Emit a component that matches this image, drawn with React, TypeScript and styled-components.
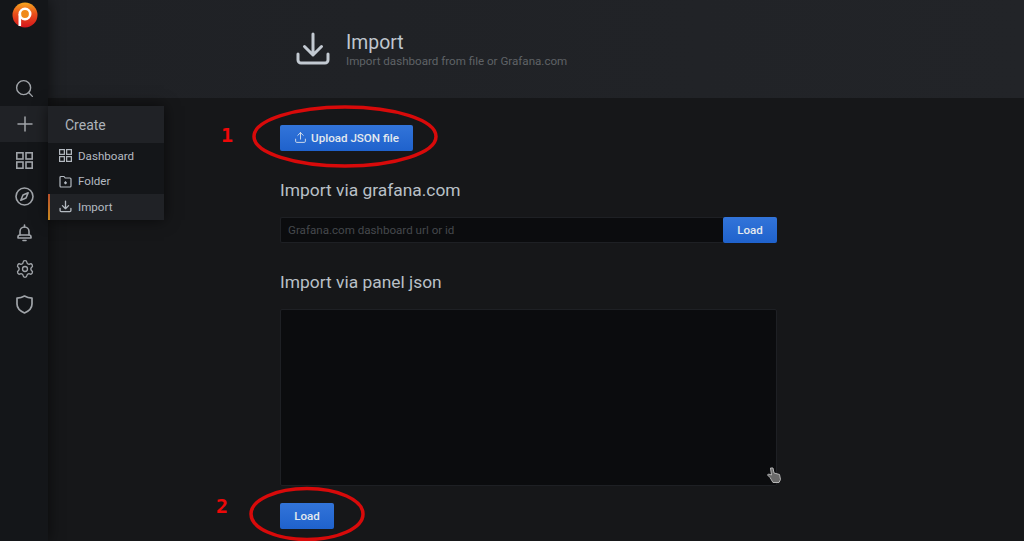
import styled, { createGlobalStyle } from 'styled-components';
import { Search, Plus, Settings, Upload } from 'lucide-react';

const GlobalStyle = createGlobalStyle`
    html, body {
        margin: 0;
        padding: 0;
        background: #161719;
        font-family: Roboto, "Liberation Sans", sans-serif;
    }
    * {
        box-sizing: border-box;
    }
`

const Page = styled.div`
    position: relative;
    display: flex;
    width: 1024px;
    height: 541px;
    overflow: hidden;
    background: #161719;
`

const SideMenu = styled.nav`
    display: flex;
    flex-direction: column;
    flex: 0 0 48px;
    width: 48px;
    padding-top: 2px;
    background: #141619;
    box-shadow: 0 0 16px rgba(0,0,0,0.6);
    z-index: 1;
`

const LogoBox = styled.div`
    display: flex;
    justify-content: center;
    height: 68px;
    margin-left: 1px;
`

const NavItem = styled.div<{ $active?: boolean }>`
    display: flex;
    align-items: center;
    justify-content: center;
    height: 36.15px;
    padding-left: 1px;
    color: #a0a4a9;
    background: ${(p) => (p.$active ? '#202226' : 'transparent')};
`

const Main = styled.main`
    flex: 1;
    display: flex;
    flex-direction: column;
`

const PageHeader = styled.header`
    display: flex;
    align-items: center;
    gap: 15px;
    height: 98px;
    padding: 0 0 0 247px;
    background: linear-gradient(90deg, #1f2125, #222428);
    color: #c3cad2;
`

const HeaderText = styled.div`
    display: flex;
    flex-direction: column;
`

const Title = styled.h1`
    margin: 1px 0 0;
    font-size: 19.4px;
    line-height: 23px;
    font-weight: 400;
    color: #bfc6ce;
`

const SubTitle = styled.div`
    font-size: 11.6px;
    line-height: 14px;
    color: #5f6266;
`

const Content = styled.section`
    display: flex;
    flex-direction: column;
    align-items: flex-start;
    width: 497px;
    margin-left: 232px;
    padding-top: 27px;
`

const BlueButton = styled.button<{ $width: number }>`
    display: flex;
    align-items: center;
    justify-content: center;
    gap: 4px;
    width: ${(p) => p.$width}px;
    height: 26px;
    padding: 0 0 1px;
    border: 0;
    border-radius: 2px;
    background: linear-gradient(180deg, #3274d9, #1f62cc);
    color: #e4e9ee;
    font-family: inherit;
    font-size: 11.6px;
    font-weight: 500;
`

const SectionTitle = styled.h2`
    margin: 0;
    font-size: 17.4px;
    line-height: 20px;
    font-weight: 400;
    color: #b9c0c7;
`

const ViaTitle = styled(SectionTitle)`
    margin-top: 29px;
`

const PanelTitle = styled(SectionTitle)`
    margin-top: 29px;
`

const InputRow = styled.div`
    display: flex;
    width: 100%;
    height: 26px;
    margin-top: 17px;
`

const FakeInput = styled.div`
    flex: 1;
    display: flex;
    align-items: center;
    padding-left: 7px;
    background: #0b0c0e;
    border: 1px solid #1e2024;
    border-right: 0;
    border-radius: 2px 0 0 2px;
    font-size: 11.6px;
    color: #45484c;
`

const JsonArea = styled.div`
    width: 100%;
    height: 177px;
    margin-top: 17px;
    background: #0b0c0e;
    border: 1px solid #1e2024;
    border-radius: 2px;
`

const LoadBelow = styled.div`
    margin-top: 17px;
`

const Flyout = styled.div`
    position: absolute;
    left: 48px;
    top: 106px;
    width: 116px;
    background: #141619;
    box-shadow: 0 0 14px rgba(0,0,0,0.6);
    z-index: 2;
`

const FlyoutHead = styled.div`
    display: flex;
    align-items: center;
    height: 37px;
    padding-left: 17px;
    background: #202226;
    font-size: 14px;
    color: #adb3ba;
`

const FlyoutItem = styled.div<{ $active?: boolean }>`
    position: relative;
    display: flex;
    align-items: center;
    gap: 6px;
    height: 25.5px;
    padding-left: 11px;
    font-size: 11.6px;
    color: #b4bac1;
    background: ${(p) => (p.$active ? '#202226' : 'transparent')};

    &::before {
        content: '';
        display: ${(p) => (p.$active ? 'block' : 'none')};
        position: absolute;
        left: 0;
        top: 0;
        bottom: 0;
        width: 2px;
        background: linear-gradient(180deg, #b9502b, #c98a1f);
    }
`

const Marks = styled.svg`
    position: absolute;
    left: 0;
    top: 0;
    z-index: 3;
    pointer-events: none;
`

const StepNumber = styled.span<{ $left: number; $top: number }>`
    position: absolute;
    left: ${(p) => p.$left}px;
    top: ${(p) => p.$top}px;
    font-family: "DejaVu Sans Mono", monospace;
    font-size: 20px;
    line-height: 24px;
    font-weight: 700;
    color: #ee0808;
    z-index: 3;
`

function Logo() {
    return (
        <svg width="26" height="26" viewBox="0 0 26 26">
            <defs>
                <linearGradient id="logoFill" x1="0" y1="0" x2="0" y2="1">
                    <stop offset="0" stopColor="#f6a81f" />
                    <stop offset="0.45" stopColor="#e9501c" />
                    <stop offset="1" stopColor="#d5151c" />
                </linearGradient>
            </defs>
            <circle cx="13" cy="13" r="12.5" fill="url(#logoFill)" />
            <circle cx="13" cy="12" r="5.2" fill="#f08a1c" stroke="#fff" strokeWidth="2.6" />
            <path d="M7.8 12V24" fill="none" stroke="#fff" strokeWidth="2.6" />
        </svg>
    )
}

function GridIcon({ size }: { size: number }) {
    return (
        <svg width={size} height={size} viewBox="0 0 17 17" fill="none" stroke="currentColor" strokeWidth="1.6">
            <rect x="0.8" y="0.8" width="6.2" height="6.2" />
            <rect x="10" y="0.8" width="6.2" height="6.2" />
            <rect x="0.8" y="10" width="6.2" height="6.2" />
            <rect x="10" y="10" width="6.2" height="6.2" />
        </svg>
    )
}

function CompassIcon() {
    return (
        <svg width="19" height="19" viewBox="0 0 19 19" fill="none" stroke="currentColor" strokeWidth="1.6" strokeLinejoin="round">
            <circle cx="9.5" cy="9.5" r="8.5" />
            <path d="M13.2 5.8L11 11 5.8 13.2 8 8z" />
        </svg>
    )
}

function BellIcon() {
    return (
        <svg width="15" height="18" viewBox="0 0 15 18" fill="none" stroke="currentColor" strokeWidth="1.6" strokeLinecap="round" strokeLinejoin="round">
            <path d="M3 11V7.5a4.5 4.5 0 0 1 9 0V11" />
            <path d="M1 14v-1a2 2 0 0 1 2-2h9a2 2 0 0 1 2 2v1z" />
            <path d="M7.5 1v2M6 16.5h3" />
        </svg>
    )
}

function ShieldIcon() {
    return (
        <svg width="17" height="19" viewBox="0 0 17 19" fill="none" stroke="currentColor" strokeWidth="1.7" strokeLinejoin="round">
            <path d="M1 3.2C4 3 6.5 2.2 8.5 1c2 1.2 4.5 2 7.5 2.2V9c0 4-3 7-7.5 9C4 16 1 13 1 9z" />
        </svg>
    )
}

function FolderIcon() {
    return (
        <svg width="13" height="13" viewBox="0 0 13 13" fill="none" stroke="currentColor" strokeWidth="1.2" strokeLinejoin="round">
            <path d="M1 2.5a1 1 0 0 1 1-1h3l1.2 1.5H11a1 1 0 0 1 1 1V11a1 1 0 0 1-1 1H2a1 1 0 0 1-1-1z" />
            <path d="M6.5 6.3v3M5 7.8h3" />
        </svg>
    )
}

function ImportIcon({ size, weight }: { size: number; weight: number }) {
    return (
        <svg width={size} height={size} viewBox="0 0 36 36" fill="none" stroke="currentColor" strokeWidth={weight} strokeLinecap="round" strokeLinejoin="round">
            <path d="M3 23v6a3 3 0 0 0 3 3h24a3 3 0 0 0 3-3v-6" />
            <path d="M18 3v21M9.5 15.5L18 24l8.5-8.5" />
        </svg>
    )
}

export default function App() {
    return (
        <Page>
            <GlobalStyle />
            <SideMenu>
                <LogoBox><Logo /></LogoBox>
                <NavItem><Search size={21} strokeWidth={1.6} /></NavItem>
                <NavItem $active><Plus size={24} strokeWidth={1.5} /></NavItem>
                <NavItem><GridIcon size={17} /></NavItem>
                <NavItem><CompassIcon /></NavItem>
                <NavItem><BellIcon /></NavItem>
                <NavItem><Settings size={20} strokeWidth={1.6} /></NavItem>
                <NavItem><ShieldIcon /></NavItem>
            </SideMenu>

            <Main>
                <PageHeader>
                    <ImportIcon size={36} weight={3} />
                    <HeaderText>
                        <Title>Import</Title>
                        <SubTitle>Import dashboard from file or Grafana.com</SubTitle>
                    </HeaderText>
                </PageHeader>
                <Content>
                    <BlueButton $width={133}><Upload size={13} strokeWidth={1.6} />Upload JSON file</BlueButton>
                    <ViaTitle>Import via grafana.com</ViaTitle>
                    <InputRow>
                        <FakeInput>Grafana.com dashboard url or id</FakeInput>
                        <BlueButton $width={54}>Load</BlueButton>
                    </InputRow>
                    <PanelTitle>Import via panel json</PanelTitle>
                    <JsonArea />
                    <LoadBelow><BlueButton $width={54}>Load</BlueButton></LoadBelow>
                </Content>
            </Main>

            <Flyout>
                <FlyoutHead>Create</FlyoutHead>
                <FlyoutItem><GridIcon size={13} />Dashboard</FlyoutItem>
                <FlyoutItem><FolderIcon />Folder</FlyoutItem>
                <FlyoutItem $active><ImportIcon size={13} weight={3.6} />Import</FlyoutItem>
            </Flyout>

            <Marks width="1024" height="541">
                <ellipse cx="345" cy="136.5" rx="91" ry="29.5" fill="none" stroke="#d80a0a" strokeWidth="3.5" />
                <ellipse cx="307" cy="514" rx="56" ry="25.5" fill="none" stroke="#d80a0a" strokeWidth="3.5" />
                <path d="M770.5 468h2.5l1 5 5.5 1.5 1 5-1.5 3h-6l-3-5-2.5-2.5 1-1 3 1z" fill="#6a6a6a" stroke="#b5b5b5" strokeWidth="1" />
            </Marks>
            <StepNumber $left={221} $top={123}>1</StepNumber>
            <StepNumber $left={216} $top={494}>2</StepNumber>
        </Page>
    )
}
